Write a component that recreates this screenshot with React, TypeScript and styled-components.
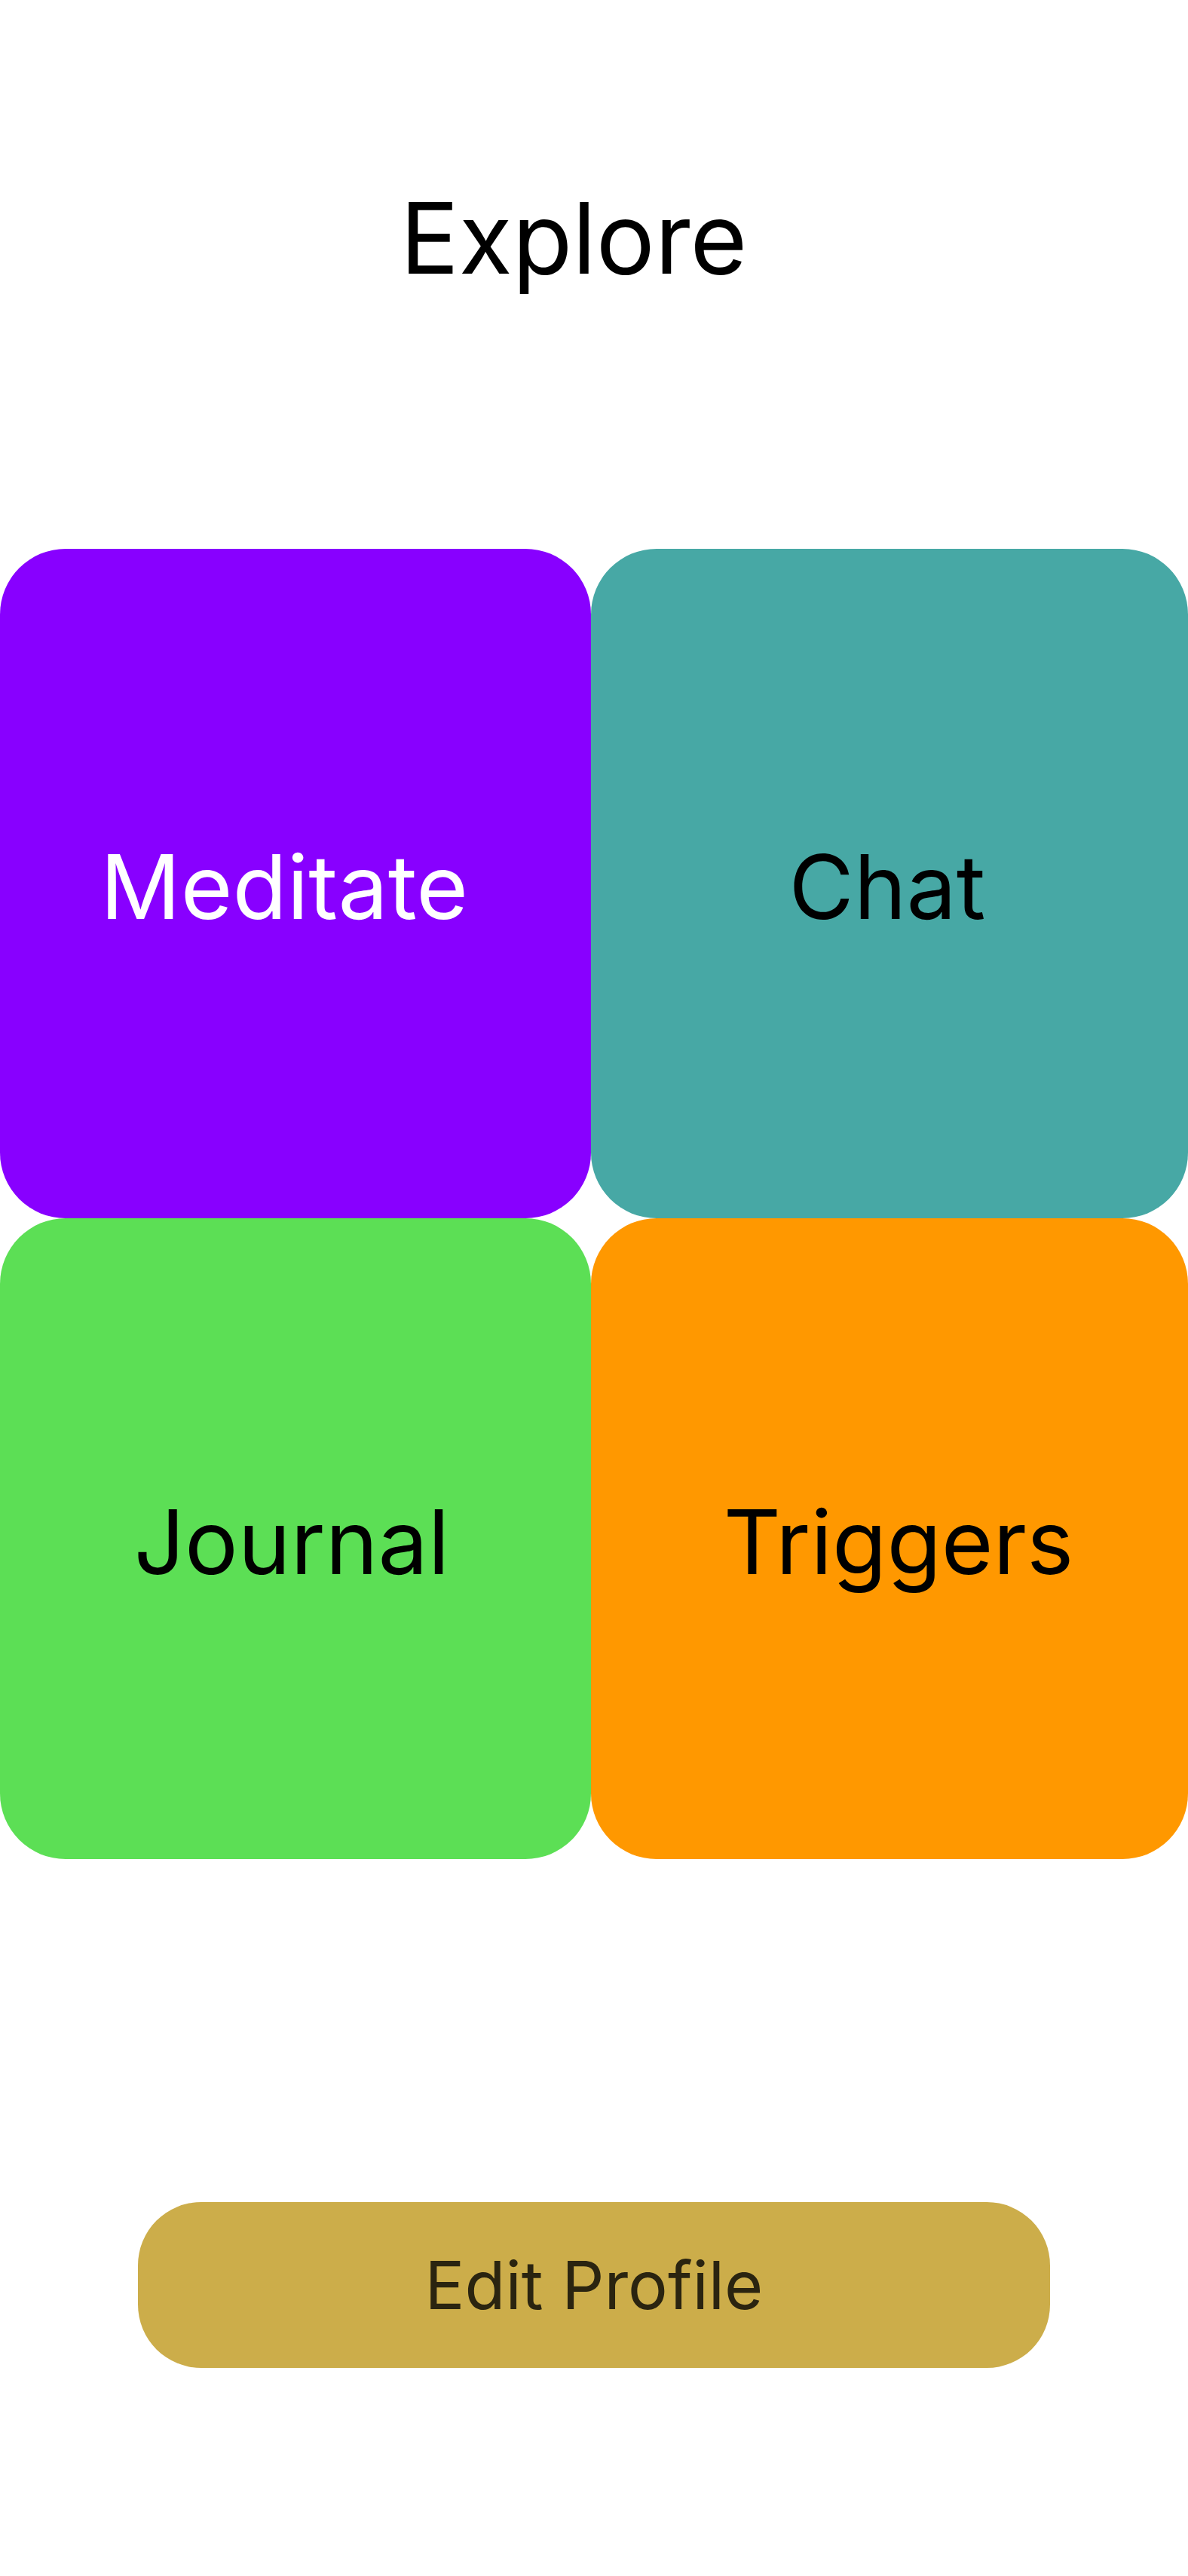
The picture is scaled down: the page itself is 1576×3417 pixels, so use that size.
import React from "react";
import styled, { createGlobalStyle } from "styled-components";

const GlobalStyle = createGlobalStyle`
  html, body {
    margin: 0;
    padding: 0;
    background: #ffffff;
  }
  body {
    font-family: Inter, "Noto Sans", "Liberation Sans", sans-serif;
  }
  * { box-sizing: border-box; }
`;

const Page = styled.div`
  min-height: 3417px;
  display: flex;
  flex-direction: column;
  background: #ffffff;
`;

const Title = styled.h1`
  margin: 0;
  padding: 237px 54px 0 0;
  text-align: center;
  font-size: 130px;
  font-weight: 400;
  line-height: normal;
  color: #000000;
`;

const Grid = styled.div`
  margin-top: 334px;
  display: grid;
  grid-template-columns: 784px 1fr;
  grid-template-rows: 888px 850px;
`;

const Tile = styled.button<{ $bg: string; $fg: string; $shift: number }>`
  border: none;
  margin: 0;
  padding: 8px ${(p) => (p.$shift < 0 ? -p.$shift * 2 : 0)}px 0
    ${(p) => (p.$shift > 0 ? p.$shift * 2 : 0)}px;
  border-radius: 87px;
  background: ${(p) => p.$bg};
  color: ${(p) => p.$fg};
  display: flex;
  align-items: center;
  justify-content: center;
  font-family: inherit;
  font-size: 118px;
  font-weight: 400;
  cursor: pointer;
`;

const Footer = styled.div`
  margin-top: 455px;
  padding: 0 183px;
`;

const EditButton = styled.button`
  width: 100%;
  height: 220px;
  border: none;
  border-radius: 84px;
  background: #ccad4a;
  color: #2a2410;
  font-family: inherit;
  font-size: 88px;
  font-weight: 400;
  display: flex;
  align-items: center;
  justify-content: center;
  cursor: pointer;
`;

const tiles = [
  { label: "Meditate", bg: "#8800ff", fg: "#ffffff", shift: -15 },
  { label: "Chat", bg: "#47a8a5", fg: "#000000", shift: -3 },
  { label: "Journal", bg: "#5cdf55", fg: "#000000", shift: -5 },
  { label: "Triggers", bg: "#ff9800", fg: "#000000", shift: 12 },
];

export default function App() {
  return (
    <>
      <GlobalStyle />
      <Page>
        <Title>Explore</Title>
        <Grid>
          {tiles.map((t) => (
            <Tile key={t.label} $bg={t.bg} $fg={t.fg} $shift={t.shift}>
              {t.label}
            </Tile>
          ))}
        </Grid>
        <Footer>
          <EditButton>Edit Profile</EditButton>
        </Footer>
      </Page>
    </>
  );
}
